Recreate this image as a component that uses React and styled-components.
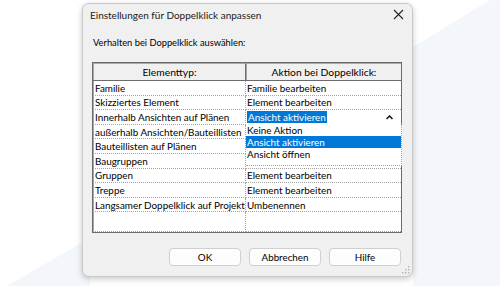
import React from "react";
import styled, { createGlobalStyle } from "styled-components";

const GlobalStyle = createGlobalStyle`
  body {
    margin: 0;
    background: #ffffff;
    font-family: Lato, "Liberation Sans", sans-serif;
    color: #000;
  }
`;

const Page = styled.div`
  position: relative;
  width: 500px;
  height: 286px;
  overflow: hidden;
  background: #ffffff;
  display: flex;
  align-items: flex-start;
  padding: 3px 0 0 82px;
  box-sizing: border-box;

  &::before,
  &::after {
    content: "";
    position: absolute;
    inset: 0;
    background: #f3f6fa;
  }

  &::before {
    clip-path: polygon(413px 47px, 490px 0, 500px 0, 500px 286px, 413px 286px);
  }

  &::after {
    clip-path: polygon(0 290px, 90px 238px, 90px 286px);
  }
`;

const Dialog = styled.div`
  position: relative;
  z-index: 1;
  width: 331px;
  height: 274px;
  box-sizing: border-box;
  background: #f0f0f0;
  border: 1px solid #c9c9c9;
  border-radius: 7px;
  box-shadow: 0 2px 6px rgba(0, 0, 0, 0.22);
  display: flex;
  flex-direction: column;
`;

const TitleBar = styled.div`
  height: 21px;
  display: flex;
  align-items: center;
  justify-content: space-between;
  padding: 0 8px 0 7px;
`;

const Title = styled.span`
  font-size: 10px;
  color: #1a1a1a;
`;

const CloseButton = styled.button`
  border: 0;
  background: none;
  padding: 0;
  width: 12px;
  height: 12px;
  display: flex;
  align-items: center;
  justify-content: center;
`;

const Body = styled.div`
  flex: 1;
  display: flex;
  flex-direction: column;
  padding: 0 11px 0 9px;
`;

const Label = styled.div`
  margin-top: 11px;
  height: 14px;
  line-height: 14px;
  font-size: 9.3px;
  padding-left: 1px;
`;

const TableBox = styled.div`
  margin-top: 12px;
  width: 310px;
  box-sizing: border-box;
  border: 1px solid #6b6b6b;
  background: #ffffff;
  position: relative;
`;

const HeaderRow = styled.div`
  display: grid;
  grid-template-columns: 153px 1fr;
  height: 18px;
  box-sizing: border-box;
  border-bottom: 1px solid #6b6b6b;
`;

const HeaderCell = styled.div`
  display: flex;
  align-items: center;
  justify-content: center;
  font-size: 10.3px;
  background: #f0f0f0;
  border-left: 1px solid #a8a8a8;
  border-top: 1px solid #a8a8a8;
  border-right: 1px solid #6b6b6b;
  box-sizing: border-box;

  &:last-child {
    border-right: 0;
  }
`;

const Row = styled.div`
  display: grid;
  grid-template-columns: 153px 1fr;
  height: ${p => p.$height || 14.6}px;
  box-sizing: border-box;
`;

const Cell = styled.div`
  position: relative;
  display: flex;
  align-items: center;
  padding-left: 1px;
  font-size: 9.9px;
  white-space: nowrap;
  overflow: ${p => (p.$open ? "visible" : "hidden")};
  box-sizing: border-box;
  border-bottom: 1px dotted #a4a4a4;
  border-left: ${p => (p.$first ? "1px solid #a8a8a8" : "0")};
  border-right: ${p => (p.$first ? "1px dotted #a4a4a4" : "0")};
`;

const Selected = styled.span`
  background: #0078d7;
  color: #fff;
  padding: 0 1px;
  line-height: 12px;
`;

const Caret = styled.svg`
  position: absolute;
  right: 8px;
  top: 5px;
`;

const DropList = styled.div`
  position: absolute;
  z-index: 2;
  left: 0;
  right: -1px;
  top: 100%;
  height: 42px;
  background: #fff;
  border-right: 1px dotted #a4a4a4;
  border-bottom: 1px dotted #a4a4a4;
  box-sizing: border-box;
`;

const DropItem = styled.div`
  height: 12px;
  line-height: 12px;
  padding-left: 1px;
  font-size: 9.9px;
  background: ${p => (p.$active ? "#0078d7" : "transparent")};
  color: ${p => (p.$active ? "#fff" : "#000")};
`;

const Footer = styled.div`
  display: flex;
  justify-content: flex-end;
  gap: 8px;
  margin-top: 15px;
`;

const Button = styled.button`
  width: 72px;
  height: 18px;
  padding: 0;
  border: 1px solid #d0d0d0;
  border-radius: 4px;
  background: #fdfdfd;
  font-family: Lato, "Liberation Sans", sans-serif;
  font-size: 9.8px;
  color: #000;
`;

const Grip = styled.svg`
  position: absolute;
  right: 2px;
  bottom: 2px;
`;

const rows = [
  ["Familie", "Familie bearbeiten"],
  ["Skizziertes Element", "Element bearbeiten"],
  ["Innerhalb Ansichten auf Plänen", "combo"],
  ["außerhalb Ansichten/Bauteillisten", ""],
  ["Bauteillisten auf Plänen", ""],
  ["Baugruppen", ""],
  ["Gruppen", "Element bearbeiten"],
  ["Treppe", "Element bearbeiten"],
  ["Langsamer Doppelklick auf Projekt", "Umbenennen"],
];

export default function App() {
  return (
    <Page>
      <GlobalStyle />
      <Dialog>
        <TitleBar>
          <Title>Einstellungen für Doppelklick anpassen</Title>
          <CloseButton aria-label="Schließen">
            <svg width="11" height="11" viewBox="0 0 11 11">
              <path d="M1 1 L10 10 M10 1 L1 10" stroke="#222" strokeWidth="1.1" />
            </svg>
          </CloseButton>
        </TitleBar>
        <Body>
          <Label>Verhalten bei Doppelklick auswählen:</Label>
          <TableBox>
            <HeaderRow>
              <HeaderCell>Elementtyp:</HeaderCell>
              <HeaderCell>Aktion bei Doppelklick:</HeaderCell>
            </HeaderRow>
            {rows.map(([type, action]) => (
              <Row key={type}>
                <Cell $first>{type}</Cell>
                {action === "combo" ? (
                  <Cell $open>
                    <Selected>Ansicht aktivieren</Selected>
                    <Caret width="7" height="5" viewBox="0 0 7 5">
                      <path d="M0.5 4 L3.5 1 L6.5 4" fill="none" stroke="#111" strokeWidth="1.5" />
                    </Caret>
                    <DropList>
                      <DropItem>Keine Aktion</DropItem>
                      <DropItem $active>Ansicht aktivieren</DropItem>
                      <DropItem>Ansicht öffnen</DropItem>
                    </DropList>
                  </Cell>
                ) : (
                  <Cell>{action}</Cell>
                )}
              </Row>
            ))}
            <Row $height={20}>
              <Cell $first />
              <Cell />
            </Row>
          </TableBox>
          <Footer>
            <Button>OK</Button>
            <Button>Abbrechen</Button>
            <Button>Hilfe</Button>
          </Footer>
        </Body>
        <Grip width="8" height="8" viewBox="0 0 8 8">
          <g fill="#b5b5b5">
            <rect x="6" y="0" width="1.5" height="1.5" />
            <rect x="3" y="3" width="1.5" height="1.5" />
            <rect x="6" y="3" width="1.5" height="1.5" />
            <rect x="0" y="6" width="1.5" height="1.5" />
            <rect x="3" y="6" width="1.5" height="1.5" />
            <rect x="6" y="6" width="1.5" height="1.5" />
          </g>
        </Grip>
      </Dialog>
    </Page>
  );
}
